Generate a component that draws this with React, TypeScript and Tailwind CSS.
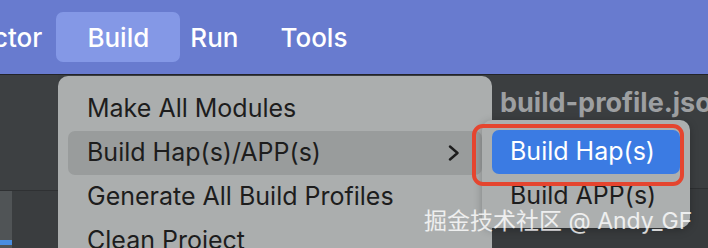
export default function App() {
  return (
    <div className="relative h-[248px] w-[708px] overflow-hidden bg-[#3c3f41] font-['Inter','Noto_Sans_CJK_SC',sans-serif]">
      {/* top menu bar */}
      <div className="flex h-[75px] items-center border-b border-[#22242a] bg-[#687bcf] text-[26px] font-medium text-white">
        <span className="ml-[-7px]">ctor</span>
        <div className="ml-[14px] flex h-[50px] w-[124px] items-center justify-center rounded-[7px] bg-[#8498e6]">
          Build
        </div>
        <span className="ml-[10px]">Run</span>
        <span className="ml-[42px]">Tools</span>
      </div>

      {/* ide behind the menu */}
      <div className="flex h-[173px]">
        <div className="flex w-[58px] shrink-0 flex-col">
          <div className="h-[115px] bg-[#3d4042]" />
          <div className="flex flex-1 border-t border-[#2f3133]">
            <div className="flex w-[12px] flex-col justify-end bg-[#505456]">
              <div className="mb-[3px] h-[5px] bg-[#4a8de0]" />
            </div>
            <div className="flex-1 bg-[#3a3d3f]" />
          </div>
        </div>
        <div className="flex min-w-0 flex-1 flex-col overflow-hidden">
          <div className="h-[113px] whitespace-nowrap bg-[#3b3e40] pl-[442px] pt-[8px] text-[27px] font-bold text-[#9d9fa1]">
            build-profile.json
          </div>
          <div className="flex-1 border-t border-[#2e3032] bg-[#383b3d]" />
        </div>
      </div>

      {/* Build menu */}
      <div className="absolute left-[58px] top-[76px] w-[434px] rounded-t-[10px] bg-[#abaeae] px-[10px] pt-[11px] text-[25px] text-[#1d1d1d]">
        <div className="flex h-[44px] items-center pl-[19px]">Make All Modules</div>
        <div className="flex h-[44px] items-center justify-between rounded-[7px] bg-[#999c9c] pl-[19px] pr-[22px]">
          <span>Build Hap(s)/APP(s)</span>
          <svg width="12" height="16" viewBox="0 0 12 16" fill="none">
            <path d="M2 1.5 L9.5 8 L2 14.5" stroke="#1d1d1d" strokeWidth="2.4" strokeLinecap="round" strokeLinejoin="round" />
          </svg>
        </div>
        <div className="flex h-[44px] items-center pl-[19px]">Generate All Build Profiles</div>
        <div className="flex h-[44px] items-center pl-[19px]">Clean Project</div>
      </div>

      {/* submenu */}
      <div className="absolute left-[482px] top-[120px] w-[208px] rounded-[10px] bg-[#acafaf] p-[10px] text-[25px] text-[#1d1d1d] shadow-[0_2px_8px_rgba(0,0,0,0.25)]">
        <div className="flex h-[44px] items-center rounded-[7px] bg-[#3b7be3] pl-[18px] text-white">Build Hap(s)</div>
        <div className="flex h-[44px] items-center pl-[18px]">Build APP(s)</div>
      </div>

      {/* annotation */}
      <div className="absolute left-[472px] top-[124px] h-[62px] w-[212px] rounded-[11px] border-[4px] border-[#e5452f]" />

      {/* watermark */}
      <div className="absolute left-[424px] top-[204px] whitespace-nowrap text-[23px] text-white/80">
        掘金技术社区 @ Andy_GF
      </div>
    </div>
  );
}
